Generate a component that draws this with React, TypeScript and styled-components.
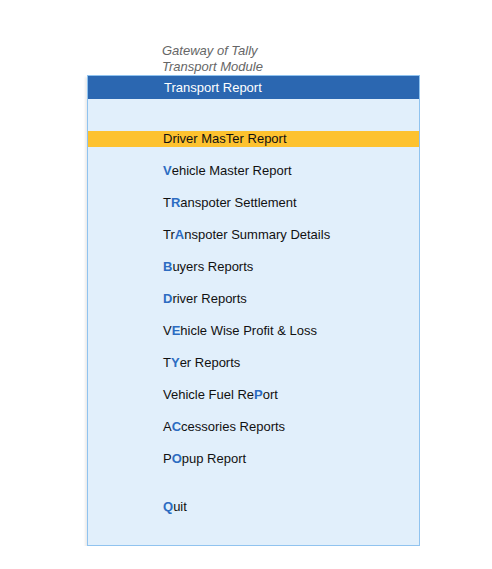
import React from 'react';
import styled, { createGlobalStyle } from 'styled-components';

const GlobalStyle = createGlobalStyle`
  html, body {
    margin: 0;
    padding: 0;
    background: #fff;
    font-family: "Liberation Sans", Arial, sans-serif;
  }
`;

// CSS in JS
const Page = styled.div`
  padding: 43px 0 0 87px;
`;

const Caption = styled.div`
  padding-left: 75px;
  font-size: 13px;
  line-height: 16px;
  font-style: italic;
  color: #666;
`;

const Panel = styled.section`
  width: 331px;
  border: 1px solid #90c3ef;
  background: #e1effb;
  box-shadow: -2px 2px 2px rgba(0, 0, 0, 0.08);
  padding-bottom: 30px;
`;

const Header = styled.h2`
  margin: 0 0 32px;
  height: 23px;
  line-height: 23px;
  padding-left: 76px;
  background: #2b67b1;
  color: #fff;
  font-size: 13px;
  font-weight: normal;
`;

const Menu = styled.ul`
  list-style: none;
  margin: 0;
  padding: 0;
  display: flex;
  flex-direction: column;
  gap: 16px;
`;

const Item = styled.li<{ $active?: boolean; $spaced?: boolean }>`
  height: 16px;
  line-height: 16px;
  padding-left: 75px;
  font-size: 13px;
  color: #111;
  background: ${(p) => (p.$active ? '#fdc22f' : 'transparent')};
  margin-top: ${(p) => (p.$spaced ? '16px' : '0')};
`;

const Key = styled.span<{ $active?: boolean }>`
  color: ${(p) => (p.$active ? '#111' : '#2c6cc2')};
  font-weight: ${(p) => (p.$active ? 'normal' : 'bold')};
`;

type Entry = { pre: string; key: string; post: string; spaced?: boolean };

const entries: Entry[] = [
  { pre: 'Driver Mas', key: 'T', post: 'er Report' },
  { pre: '', key: 'V', post: 'ehicle Master Report' },
  { pre: 'T', key: 'R', post: 'anspoter Settlement' },
  { pre: 'Tr', key: 'A', post: 'nspoter Summary Details' },
  { pre: '', key: 'B', post: 'uyers Reports' },
  { pre: '', key: 'D', post: 'river Reports' },
  { pre: 'V', key: 'E', post: 'hicle Wise Profit & Loss' },
  { pre: 'T', key: 'Y', post: 'er Reports' },
  { pre: 'Vehicle Fuel Re', key: 'P', post: 'ort' },
  { pre: 'A', key: 'C', post: 'cessories Reports' },
  { pre: 'P', key: 'O', post: 'pup Report' },
  { pre: '', key: 'Q', post: 'uit', spaced: true },
];

export default function App() {
  return (
    <>
      <GlobalStyle />
      <Page>
        <Caption>Gateway of Tally</Caption>
        <Caption>Transport Module</Caption>
        <Panel>
          <Header>Transport Report</Header>
          <Menu>
            {entries.map((e, i) => (
              <Item key={i} $active={i === 0} $spaced={e.spaced}>
                {e.pre}
                <Key $active={i === 0}>{e.key}</Key>
                {e.post}
              </Item>
            ))}
          </Menu>
        </Panel>
      </Page>
    </>
  );
}
